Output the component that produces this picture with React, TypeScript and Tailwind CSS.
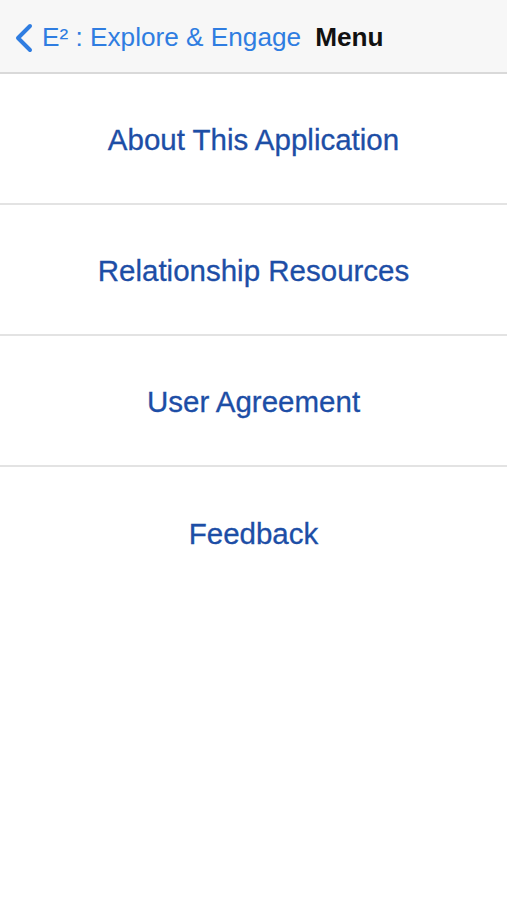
import React from "react";

const items = ["About This Application", "Relationship Resources", "User Agreement", "Feedback"];

export default function App() {
  return (
    <div className="w-[507px] h-[900px] bg-white flex flex-col" style={{ fontFamily: '"Liberation Sans", Arial, sans-serif' }}>
      <div className="h-[74px] bg-[#f7f7f7] border-b-2 border-[#d9d9d9] flex items-center pl-[14px] pt-[3px] shrink-0">
        <svg width="20" height="30" viewBox="0 0 20 30" className="mr-[8px]">
          <path d="M16 3 L4 15 L16 27" fill="none" stroke="#2f7de1" strokeWidth="4" strokeLinecap="round" strokeLinejoin="round" />
        </svg>
        <span className="text-[26.2px] text-[#2f7de1]">E² : Explore &amp; Engage</span>
        <span className="text-[26.2px] font-bold text-[#111] ml-[14px]">Menu</span>
      </div>
      {items.map((t, i) => (
        <div
          key={t}
          className={`h-[131px] flex items-center justify-center pt-[3px] shrink-0 ${i < 3 ? "border-b-2 border-[#e3e3e3]" : ""}`}
        >
          <span className="text-[29.5px] text-[#1d4ea6] [-webkit-text-stroke:0.3px_#1d4ea6]">{t}</span>
        </div>
      ))}
    </div>
  );
}
